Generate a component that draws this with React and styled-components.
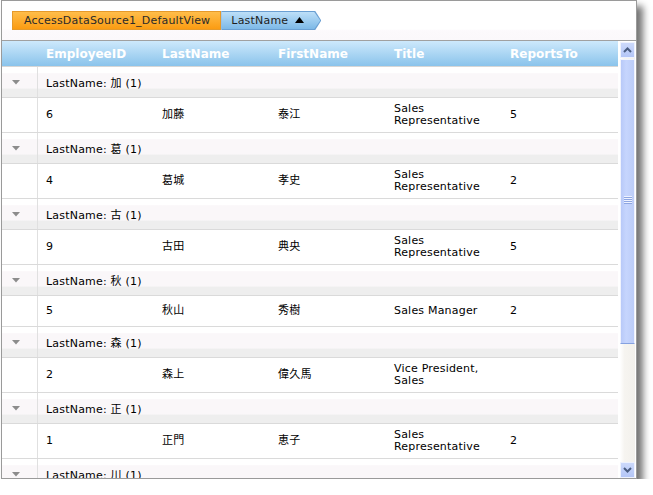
import React from 'react';
import styled, { createGlobalStyle } from 'styled-components';

const GlobalStyle = createGlobalStyle`
  html, body { margin: 0; padding: 0; background: #ffffff; }
  body { font-family: "DejaVu Sans", "Noto Sans CJK JP", sans-serif; }
`;

const Panel = styled.div`
  box-sizing: border-box;
  width: 636px;
  height: 479px;
  margin-left: 1px;
  border: 1px solid #9a9a9a;
  background: #fff;
  box-shadow: 6px 6px 7px rgba(0, 0, 0, 0.55);
  display: flex;
  flex-direction: column;
  overflow: hidden;
`;

const CrumbBar = styled.div`
  height: 40px;
  flex: none;
  border-bottom: 1px solid #a0a0a0;
  background: linear-gradient(#ffffff 0%, #ffffff 72%, #fcf9fc 76%, #fbf8fb 100%);
  display: flex;
  align-items: flex-start;
  padding: 10px 0 0 10px;
  box-sizing: border-box;
`;

const SourceCrumb = styled.span`
  box-sizing: border-box;
  height: 19px;
  display: inline-flex;
  align-items: center;
  padding: 0 10px 0 11px;
  border: 1px solid #e69a2a;
  background: linear-gradient(#ffbd4a, #fb9c12);
  font-size: 11px;
  letter-spacing: 0.2px;
  color: #2a2a2a;
`;

const arrow = 'polygon(0 0, calc(100% - 6px) 0, 100% 50%, calc(100% - 6px) 100%, 0 100%)';

const SortCrumb = styled.span`
  position: relative;
  height: 19px;
  display: inline-flex;
  align-items: center;
  padding: 0 17px 0 10px;
  background: #6a9fd2;
  clip-path: ${arrow};
  font-size: 11px;
  letter-spacing: 0.2px;
  color: #1e1e1e;

  &::before {
    content: '';
    position: absolute;
    inset: 1px 1px 1px 0;
    background: linear-gradient(#bddff8, #7db9e7);
    clip-path: ${arrow};
  }

  & > * { position: relative; }
`;

const SortArrow = styled.svg`
  margin-left: 7px;
  margin-top: -1px;
`;

const GridArea = styled.div`
  flex: 1;
  display: flex;
  min-height: 0;
`;

const Grid = styled.div`
  width: 616px;
  display: flex;
  flex-direction: column;
  min-height: 0;
`;

const Body = styled.div`
  flex: 1;
  overflow: hidden;
`;

const columns = '36px repeat(4, 116px) 1fr';

const HeaderRow = styled.div`
  display: grid;
  grid-template-columns: ${columns};
  height: 26px;
  flex: none;
  box-sizing: border-box;
  border-bottom: 1px solid #d6d6d6;
  background: linear-gradient(#cde9fc, #8ac3eb);
`;

const HeaderCell = styled.div`
  display: flex;
  align-items: center;
  padding: 1px 8px 0;
  font-size: 12px;
  font-weight: bold;
  color: #ffffff;
`;

const GroupRow = styled.div`
  display: grid;
  grid-template-columns: ${columns};
  height: 31px;
  box-sizing: border-box;
  border-bottom: 1px solid #dadada;
  background: linear-gradient(#ffffff 0%, #ffffff 20%, #faf7f9 22%, #faf7f9 70%, #eeeeee 74%, #eeeeee 100%);
`;

const ToggleCell = styled.div`
  border-right: 1px solid #e0e0e0;
  display: flex;
  align-items: center;
  padding-left: 10px;
`;

const GroupLabel = styled.div`
  grid-column: 2 / -1;
  display: flex;
  align-items: center;
  padding-left: 8px;
  font-size: 11px;
  letter-spacing: 0.2px;
  color: #000;
`;

const DataRow = styled.div`
  display: grid;
  grid-template-columns: ${columns};
  min-height: 31px;
  box-sizing: border-box;
  border-bottom: 1px solid #dadada;
  background: #ffffff;
`;

const Cell = styled.div`
  display: flex;
  align-items: center;
  padding: 5px 8px;
  font-size: 11px;
  line-height: 12px;
  letter-spacing: 0.2px;
  color: #000;
`;

const Spacer = styled.div`
  border-right: 1px solid #e0e0e0;
`;

const ScrollColumn = styled.div`
  flex: 1;
  display: flex;
  flex-direction: column;
  padding: 1px 1px 0 2px;
  background: #ffffff;
`;

const ScrollButton = styled.div`
  height: 16px;
  flex: none;
  box-sizing: border-box;
  border: 1px solid #eef2fd;
  background: linear-gradient(#ccd9fb, #b4c6f7);
  display: flex;
  align-items: center;
  justify-content: center;
`;

const Track = styled.div`
  flex: 1;
  display: flex;
  flex-direction: column;
  padding: 1px 0;
  background: linear-gradient(90deg, #ffffff, #f6f4f0 30%, #f3f1ec);
`;

const Thumb = styled.div`
  height: 285px;
  box-sizing: border-box;
  border: 1px solid #f0f3fd;
  border-bottom: 1px solid #86a2e0;
  background: linear-gradient(90deg, #b8c9f8, #c6d5fd 40%, #bccdf9);
  display: flex;
  align-items: center;
  justify-content: center;
  padding-bottom: 4px;
`;

const Grip = styled.div`
  width: 8px;
  height: 8px;
  background: repeating-linear-gradient(#eef2ff 0, #eef2ff 1px, #8ea6e2 1px, #8ea6e2 2px);
`;

const Chevron = ({ up }) => (
  <svg width="9" height="6" viewBox="0 0 9 6">
    <polyline
      points={up ? '1,5 4.5,1.5 8,5' : '1,1 4.5,4.5 8,1'}
      fill="none"
      stroke="#4a5d82"
      strokeWidth="2"
    />
  </svg>
);

const groups = [
  { key: '加', row: ['6', '加藤', '泰江', 'Sales Representative', '5'] },
  { key: '葛', row: ['4', '葛城', '孝史', 'Sales Representative', '2'] },
  { key: '古', row: ['9', '古田', '典央', 'Sales Representative', '5'] },
  { key: '秋', row: ['5', '秋山', '秀樹', 'Sales Manager', '2'] },
  { key: '森', row: ['2', '森上', '偉久馬', 'Vice President, Sales', ''] },
  { key: '正', row: ['1', '正門', '恵子', 'Sales Representative', '2'] },
  { key: '川', row: ['3', '川村', '美知', 'Sales Representative', '2'] },
];

const headers = ['EmployeeID', 'LastName', 'FirstName', 'Title', 'ReportsTo'];

const Toggle = () => (
  <svg width="8" height="5" viewBox="0 0 8 5">
    <polygon points="0,0 8,0 4,4.5" fill="#8c8c8c" />
  </svg>
);

export default function App() {
  return (
    <>
      <GlobalStyle />
      <Panel>
        <CrumbBar>
          <SourceCrumb>AccessDataSource1_DefaultView</SourceCrumb>
          <SortCrumb>
            <span>LastName</span>
            <SortArrow width="9" height="6" viewBox="0 0 9 6">
              <polygon points="0,6 9,6 4.5,0" fill="#000" />
            </SortArrow>
          </SortCrumb>
        </CrumbBar>
        <GridArea>
          <Grid>
            <HeaderRow>
              <div />
              {headers.map((h) => (
                <HeaderCell key={h}>{h}</HeaderCell>
              ))}
            </HeaderRow>
            <Body>
              {groups.map((g) => (
                <React.Fragment key={g.key}>
                  <GroupRow>
                    <ToggleCell>
                      <Toggle />
                    </ToggleCell>
                    <GroupLabel>LastName: {g.key} (1)</GroupLabel>
                  </GroupRow>
                  <DataRow>
                    <Spacer />
                    {g.row.map((v, i) => (
                      <Cell key={i}>{v}</Cell>
                    ))}
                  </DataRow>
                </React.Fragment>
              ))}
            </Body>
          </Grid>
          <ScrollColumn>
            <ScrollButton>
              <Chevron up />
            </ScrollButton>
            <Track>
              <Thumb>
                <Grip />
              </Thumb>
            </Track>
            <ScrollButton>
              <Chevron />
            </ScrollButton>
          </ScrollColumn>
        </GridArea>
      </Panel>
    </>
  );
}
